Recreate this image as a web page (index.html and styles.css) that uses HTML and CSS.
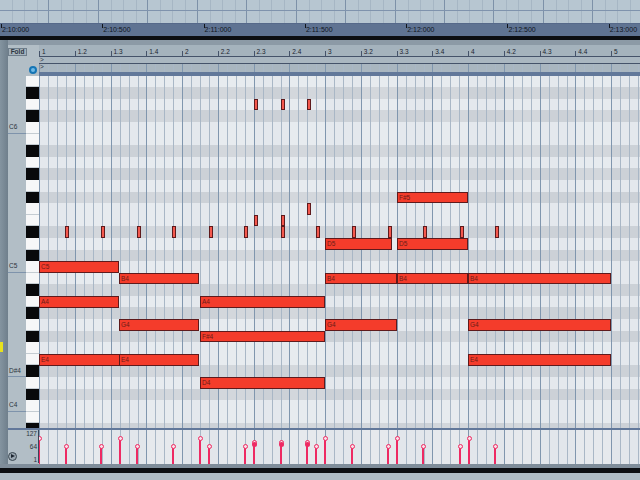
FILE: index.html
```html
<!DOCTYPE html>
<html lang="en">
<head>
<meta charset="utf-8">
<title>MIDI note editor</title>
<link rel="stylesheet" href="styles.css">
</head>
<body>
<div class="page">
  <div class="arrange">
    <i></i><i></i><i></i><i></i><i></i><i></i><i></i><i></i><i></i><i></i><i></i><i></i><i></i>
  </div>
  <div class="timeline">
    <span class="time">2:10:000</span><span class="time">2:10:500</span><span class="time">2:11:000</span><span class="time">2:11:500</span><span class="time">2:12:000</span><span class="time">2:12:500</span><span class="time">2:13:000</span>
  </div>
  <div class="rule-black"></div>
  <div class="editor">
    <div class="edge"><span class="marker"></span></div>
    <div class="side">
      <div class="side-head">
        <span class="fold">Fold</span>
        <span class="info"></span>
      </div>
      <div class="keyboard">
        <div class="labels">
          <span class="oct" style="top:46.4px">C6</span>
          <span class="oct" style="top:185.6px">C5</span>
          <span class="oct" style="top:290px">D#4</span>
          <span class="oct" style="top:324.8px">C4</span>
        </div>
        <div class="keys">
          <i class="w"></i><i class="b"></i><i class="w"></i><i class="b"></i><i class="w"></i><i class="w"></i><i class="b"></i><i class="w"></i><i class="b"></i><i class="w"></i><i class="b"></i><i class="w"></i><i class="w"></i><i class="b"></i><i class="w"></i><i class="b"></i><i class="w"></i><i class="w"></i><i class="b"></i><i class="w"></i><i class="b"></i><i class="w"></i><i class="b"></i><i class="w"></i><i class="w"></i><i class="b"></i><i class="w"></i><i class="b"></i><i class="w"></i><i class="w"></i><i class="b"></i>
        </div>
      </div>
      <div class="vel-scale">
        <span class="play"></span>
        <div class="vel-nums"><span>127</span><span>64</span><span>1</span></div>
      </div>
    </div>
    <div class="main">
      <div class="bars">
        <span>1</span><span>1.2</span><span>1.3</span><span>1.4</span><span>2</span><span>2.2</span><span>2.3</span><span>2.4</span><span>3</span><span>3.2</span><span>3.3</span><span>3.4</span><span>4</span><span>4.2</span><span>4.3</span><span>4.4</span><span>5</span>
      </div>
      <div class="lane lane-a">&gt;</div>
      <div class="lane lane-b">
        <div class="beats"><i></i><i></i><i></i><i></i><i></i><i></i><i></i><i></i><i></i><i></i><i></i><i></i><i></i><i></i><i></i><i></i><i></i></div>
        <span class="lane-mark">&gt;</span>
      </div>
      <div class="band"></div>
      <div class="roll">
        <div class="rows">
          <i class="w"></i><i class="b"></i><i class="w"></i><i class="b"></i><i class="w"></i><i class="w"></i><i class="b"></i><i class="w"></i><i class="b"></i><i class="w"></i><i class="b"></i><i class="w"></i><i class="w"></i><i class="b"></i><i class="w"></i><i class="b"></i><i class="w"></i><i class="w"></i><i class="b"></i><i class="w"></i><i class="b"></i><i class="w"></i><i class="b"></i><i class="w"></i><i class="w"></i><i class="b"></i><i class="w"></i><i class="b"></i><i class="w"></i><i class="w"></i><i class="b"></i>
        </div>
        <div class="beats"><i></i><i></i><i></i><i></i><i></i><i></i><i></i><i></i><i></i><i></i><i></i><i></i><i></i><i></i><i></i><i></i><i></i></div>

        <div class="note" style="left:0;top:185.6px;width:80px">C5</div>
        <div class="note" style="left:80px;top:197.2px;width:80px">B4</div>
        <div class="note" style="left:0;top:220.4px;width:80px">A4</div>
        <div class="note" style="left:80px;top:243.6px;width:80px">G4</div>
        <div class="note" style="left:0;top:278.4px;width:81px">E4</div>
        <div class="note" style="left:80px;top:278.4px;width:80px">E4</div>
        <div class="note" style="left:161px;top:220.4px;width:125px">A4</div>
        <div class="note" style="left:161px;top:255.2px;width:125px">F#4</div>
        <div class="note" style="left:161px;top:301.6px;width:125px">D4</div>
        <div class="note" style="left:286px;top:162.4px;width:67px">D5</div>
        <div class="note" style="left:358px;top:162.4px;width:71px">D5</div>
        <div class="note" style="left:286px;top:197.2px;width:72px">B4</div>
        <div class="note" style="left:358px;top:197.2px;width:71px">B4</div>
        <div class="note" style="left:429px;top:197.2px;width:143px">B4</div>
        <div class="note" style="left:286px;top:243.6px;width:72px">G4</div>
        <div class="note" style="left:429px;top:243.6px;width:143px">G4</div>
        <div class="note" style="left:429px;top:278.4px;width:143px">E4</div>
        <div class="note" style="left:358px;top:116px;width:71px">F#5</div>

        <div class="tick" style="left:215px;top:23.2px"></div>
        <div class="tick" style="left:242px;top:23.2px"></div>
        <div class="tick" style="left:268px;top:23.2px"></div>
        <div class="tick" style="left:215px;top:139.2px"></div>
        <div class="tick" style="left:242px;top:139.2px"></div>
        <div class="tick" style="left:268px;top:127.6px"></div>
        <div class="tick" style="left:26px;top:150.8px"></div>
        <div class="tick" style="left:62px;top:150.8px"></div>
        <div class="tick" style="left:98px;top:150.8px"></div>
        <div class="tick" style="left:133px;top:150.8px"></div>
        <div class="tick" style="left:170px;top:150.8px"></div>
        <div class="tick" style="left:205px;top:150.8px"></div>
        <div class="tick" style="left:242px;top:150.8px"></div>
        <div class="tick" style="left:277px;top:150.8px"></div>
        <div class="tick" style="left:313px;top:150.8px"></div>
        <div class="tick" style="left:349px;top:150.8px"></div>
        <div class="tick" style="left:384px;top:150.8px"></div>
        <div class="tick" style="left:421px;top:150.8px"></div>
        <div class="tick" style="left:456px;top:150.8px"></div>
      </div>
      <div class="vel">
        <div class="beats"><i></i><i></i><i></i><i></i><i></i><i></i><i></i><i></i><i></i><i></i><i></i><i></i><i></i><i></i><i></i><i></i><i></i></div>
        <span class="stem" style="left:0;top:8px"></span>
        <span class="stem" style="left:27px;top:16px"></span>
        <span class="stem" style="left:62px;top:16px"></span>
        <span class="stem" style="left:81px;top:8px"></span>
        <span class="stem" style="left:98px;top:16px"></span>
        <span class="stem" style="left:134px;top:16px"></span>
        <span class="stem" style="left:161px;top:8px"></span>
        <span class="stem" style="left:170px;top:16px"></span>
        <span class="stem" style="left:206px;top:16px"></span>
        <span class="stem dbl" style="left:215px;top:12px"></span>
        <span class="stem dbl" style="left:242px;top:12px"></span>
        <span class="stem dbl" style="left:268px;top:12px"></span>
        <span class="stem" style="left:277px;top:16px"></span>
        <span class="stem" style="left:286px;top:8px"></span>
        <span class="stem" style="left:313px;top:16px"></span>
        <span class="stem" style="left:349px;top:16px"></span>
        <span class="stem" style="left:358px;top:8px"></span>
        <span class="stem" style="left:384px;top:16px"></span>
        <span class="stem" style="left:421px;top:16px"></span>
        <span class="stem" style="left:430px;top:8px"></span>
        <span class="stem" style="left:456px;top:16px"></span>
      </div>
    </div>
  </div>
  <div class="footer-grey"></div>
  <div class="footer-black"></div>
  <div class="footer-light"></div>
</div>
</body>
</html>
```

FILE: styles.css
```css
html, body { margin: 0; padding: 0; }
body { width: 640px; height: 480px; overflow: hidden; background: #8d9ba6; }
.page {
  width: 640px; height: 480px; overflow: hidden;
  display: flex; flex-direction: column;
  font-family: "Liberation Sans", Arial, sans-serif;
  color: #2c3540;
}

/* arrangement strip */
.arrange {
  height: 23px; flex: none; display: flex;
  position: relative;
  background: #b7c6d1;
}
.arrange::after {
  content: ""; position: absolute; left: 0; right: 0; top: 10px; height: 1px;
  background: #7f93ad;
}
.arrange i {
  display: block; flex: none; width: 49.45px; box-sizing: border-box;
  border-right: 1px solid #7d91a8;
  background: linear-gradient(90deg,
    transparent 12px, #a6b6c4 12px, #a6b6c4 13px, transparent 13px,
    transparent 24px, #a6b6c4 24px, #a6b6c4 25px, transparent 25px,
    transparent 37px, #a6b6c4 37px, #a6b6c4 38px, transparent 38px);
}
.timeline {
  height: 13px; flex: none;
  background: #5f7392;
  display: flex;
  padding-left: 2px;
  color: #10151d;
  font-size: 7px;
  line-height: 11px;
  border-top: 1px solid #56698a;
  box-sizing: border-box;
}
.time { width: 101.3px; flex: none; white-space: nowrap; position: relative; }
.time::before {
  content: ""; position: absolute; left: -1px; top: 0; width: 1px; height: 4px; background: #10151d;
}
.rule-black { height: 4px; flex: none; background: #0c0e12; }

/* editor */
.editor { height: 429px; flex: none; display: flex; background: #8f9daa; }
.edge {
  width: 8px; flex: none; position: relative;
  background: linear-gradient(90deg, #8494a0, #6f7f8c);
}
.marker { position: absolute; left: 0; top: 302px; width: 3px; height: 10px; background: #e8e21c; }
.side { width: 31px; flex: none; display: flex; flex-direction: column; background: #b2bec6; }
.side-head { height: 35.6px; flex: none; position: relative; border-top: 5px solid #8c9aa6; box-sizing: border-box; }
.fold {
  position: absolute; left: 0; top: 3px;
  width: 17px; height: 6px;
  border: 1px solid #6e7d8a;
  background: #a5b2bc;
  font-size: 6.5px; line-height: 6px; text-align: center; font-weight: bold;
  color: #2c3540;
}
.info {
  position: absolute; left: 21px; top: 21px;
  width: 4px; height: 4px; border-radius: 50%;
  background: #6db9e6; border: 2px solid #1575b5;
}
.keyboard { height: 352.4px; flex: none; display: flex; overflow: hidden; }
.labels { width: 18px; flex: none; position: relative; }
.oct {
  position: absolute; left: 0; width: 18px; height: 11.6px;
  border-bottom: 1px solid #7e93ab;
  box-sizing: border-box;
  font-size: 6.5px; line-height: 10px; padding-left: 1px; color: #2c3540;
}
.keys { width: 13px; flex: none; display: flex; flex-direction: column; }
.keys i { height: 11.6px; flex: none; display: block; box-sizing: border-box; }
.keys .w { background: #f6f7f8; border-bottom: 1px solid #c4ccd2; }
.keys .b { background: #08090b; }
.vel-scale {
  flex: 1; position: relative;
  border-top: 2px solid #62789a;
  background: #b2bec6;
}
.vel-nums {
  position: absolute; right: 0; top: 0; height: 33px; width: 14px;
  display: flex; flex-direction: column; justify-content: space-between; align-items: flex-end;
  padding: 0 1px 0 0;
  font-size: 6.5px; line-height: 7px;
  color: #2c3540;
  border-right: 1px solid #39465a;
}
.play {
  position: absolute; left: 0; top: 22px;
  width: 7px; height: 7px; border-radius: 50%;
  border: 1px solid #38454f; background: #9aa7b1;
}
.play::after {
  content: ""; position: absolute; left: 2px; top: 1px;
  border-left: 4px solid #1c2530; border-top: 2.5px solid transparent; border-bottom: 2.5px solid transparent;
}

.main { width: 601px; flex: none; display: flex; flex-direction: column; background: #a5b3bd; }
.bars {
  height: 17px; flex: none; display: flex; box-sizing: border-box;
  background: #a5b3bd;
  border-top: 5px solid #8c9aa6;
  border-bottom: 1px solid #45536a;
  align-items: flex-end;
}
.bars span {
  width: 35.75px; flex: none; box-sizing: border-box;
  position: relative;
  padding-left: 3px;
  font-size: 6.5px; line-height: 8px; color: #1c2530;
}
.bars span::before {
  content: ""; position: absolute; left: 0; bottom: 0; width: 1px; height: 5px; background: #45536a;
}
.lane {
  height: 7px; flex: none; box-sizing: border-box; position: relative;
  font-size: 6.5px; line-height: 6px; padding-left: 1px; color: #2c3540;
}
.lane-a { background: #aab7c1; border-bottom: 1px solid #45536a; }
.lane-b { height: 8px; background: #a9b6c0; }
.lane-mark { position: absolute; left: 1px; top: 0; }
.band { height: 3.6px; flex: none; background: #62789a; }
.roll { height: 352.4px; flex: none; position: relative; overflow: hidden; }
.rows { display: flex; flex-direction: column; }
.rows i { height: 11.6px; flex: none; display: block; }
.rows .w { background: #e4e8ed; }
.rows .b { background: #ccd1d7; }

/* one cell per beat, with the three sixteenth lines drawn inside it */
.beats { position: absolute; inset: 0; display: flex; }
.beats i {
  display: block; flex: none; width: 35.75px; box-sizing: border-box;
  border-left: 1px solid #8096ae;
  background-image: linear-gradient(90deg,
    transparent 8px, #a9b7c6 8px, #a9b7c6 9px, transparent 9px,
    transparent 17px, #a9b7c6 17px, #a9b7c6 18px, transparent 18px,
    transparent 26px, #a9b7c6 26px, #a9b7c6 27px, transparent 27px);
}
.beats i:nth-child(even) { background-color: rgba(255,255,255,.14); }
.lane-b .beats i { background-color: transparent; }

.note {
  position: absolute; height: 11.6px; box-sizing: border-box;
  background: #f43c2b;
  border: 1px solid #5e1a1c;
  font-size: 6.5px; line-height: 9.6px; padding-left: 1px;
  color: #6b1d18;
  white-space: nowrap; overflow: hidden;
}
.tick {
  position: absolute; width: 4px; height: 11.6px; box-sizing: border-box;
  background: #f4584d;
  border: 1px solid #5e1a1c;
}
.vel {
  flex: 1; position: relative; overflow: hidden;
  background: #e2e6eb;
  border-top: 2px solid #62789a;
}
.stem {
  position: absolute; bottom: 0; width: 2px;
  margin-left: -1px; background: #ee2a63;
}
.stem::before {
  content: ""; position: absolute; left: -1.5px; top: -2px;
  width: 5px; height: 5px; box-sizing: border-box;
  border-radius: 50%; border: 1.5px solid #ee2a63; background: #f8dfe7;
}
.dbl::after {
  content: ""; position: absolute; left: -1.5px; top: 0;
  width: 5px; height: 5px; border-radius: 50%; background: #ee2a63;
}
.footer-grey { height: 4px; flex: none; background: #7f8d9a; margin-top: -5px; position: relative; }
.footer-black { height: 5px; flex: none; background: #0c0e12; position: relative; }
.footer-light { flex: 1; background: #aebbc5; position: relative; }
```
